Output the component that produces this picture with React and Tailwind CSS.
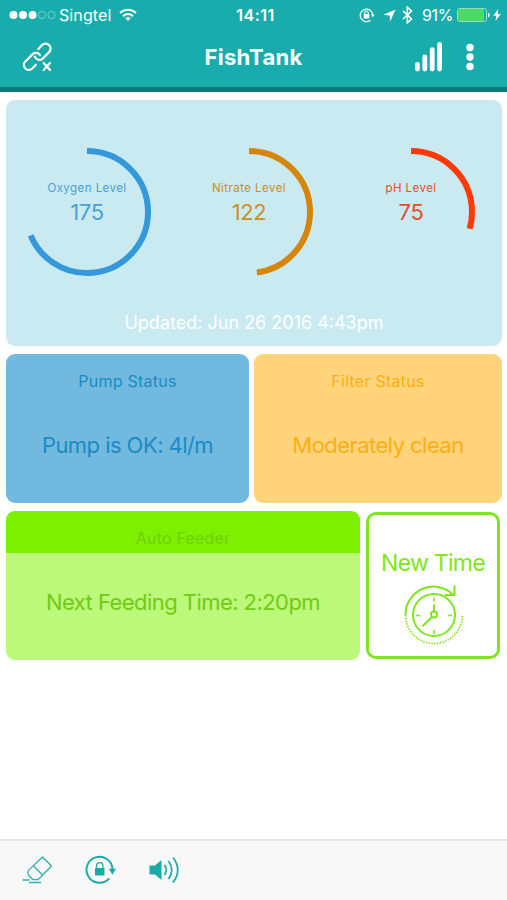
import React from 'react';

const gauges = [
  { label: 'Oxygen Level', value: 175, stroke: '#3498db', text: 'text-[#4a9fd8]' },
  { label: 'Nitrate Level', value: 122, stroke: '#d68508', text: 'text-[#cf8e26]' },
  { label: 'pH Level', value: 75, stroke: '#ff3a06', text: 'text-[#ea4c2b]' },
];

const MAX_LEVEL = 255;

function Gauge({ label, value, stroke, text }) {
  const circumference = 2 * Math.PI * 61;
  const filled = (value / MAX_LEVEL) * circumference;

  return (
    <div className="grid w-[162px] place-items-center">
      <svg className="col-start-1 row-start-1" width="128" height="128" viewBox="0 0 128 128" fill="none">
        <circle
          cx="64"
          cy="64"
          r="61"
          stroke={stroke}
          strokeWidth="6"
          strokeDasharray={`${filled} ${circumference}`}
          transform="rotate(-90 64 64)"
        />
      </svg>
      <div className={`col-start-1 row-start-1 flex flex-col items-center pb-[18px] ${text}`}>
        <span className="text-[11.5px] leading-[16px] tracking-[0.45px]">{label}</span>
        <span className="mt-[2px] text-[22px] leading-[28px] tracking-[-0.4px]">{value}</span>
      </div>
    </div>
  );
}

function StatusBar() {
  return (
    <div className="grid h-[30px] grid-cols-[1fr_auto_1fr] items-center text-[16px] text-white">
      <div className="ml-[9px] flex items-center">
        <svg width="47" height="10" viewBox="0 0 47 10" fill="none">
          <circle cx="4.5" cy="5" r="4" fill="#fff" />
          <circle cx="14" cy="5" r="4" fill="#fff" />
          <circle cx="23.5" cy="5" r="4" fill="#fff" />
          <circle cx="33" cy="5" r="3.6" stroke="#8ad6d4" strokeWidth="0.8" />
          <circle cx="42.5" cy="5" r="3.6" stroke="#8ad6d4" strokeWidth="0.8" />
        </svg>
        <span className="ml-[3px] tracking-[0.1px]">Singtel</span>
        <svg className="ml-[8px]" width="18" height="14" viewBox="0 0 18 14" fill="none" stroke="#fff" strokeWidth="2">
          <path d="M1 5a11.3 11.3 0 0 1 16 0" />
          <path d="M4 8.2a7 7 0 0 1 10 0" />
          <path d="M9 13 6.3 10.3a3.9 3.9 0 0 1 5.4 0Z" fill="#fff" stroke="none" />
        </svg>
      </div>
      <span className="ml-[4px] font-semibold tracking-[0.5px]">14:11</span>
      <div className="mr-[6px] flex items-center justify-end">
        <svg width="16" height="16" viewBox="0 0 16 16" fill="none" stroke="#fff">
          <path d="M11.5 13.3a6.3 6.3 0 1 1 2.3-5.3" strokeWidth="1.2" />
          <path d="m11.9 7.6 3.7 0-1.8 2.6Z" fill="#fff" stroke="none" />
          <rect x="4.8" y="7" width="5.4" height="4.4" rx=".5" fill="#fff" stroke="none" />
          <path d="M5.8 7V5.7a1.7 1.7 0 0 1 3.4 0V7" strokeWidth="1.1" />
        </svg>
        <svg className="ml-[8px]" width="13" height="13" viewBox="0 0 13 13">
          <path d="M12.5 .5 7.3 12.2 6.6 6.5 .5 5.8Z" fill="#fff" />
        </svg>
        <svg className="ml-[6px]" width="11" height="18" viewBox="0 0 11 18" fill="none" stroke="#fff" strokeWidth="1.6">
          <path d="m1 4.8 8.5 8.2-4.2 3.8V1.2L9.5 5 1 13" />
        </svg>
        <span className="ml-[9px] w-[32px] text-[16px] tracking-[-0.3px]">91%</span>
        <svg className="ml-[3px]" width="34" height="14" viewBox="0 0 34 14" fill="none">
          <rect x=".5" y=".5" width="29" height="13" rx="2" stroke="#9bdcc9" strokeWidth="1" />
          <rect x="1" y="1" width="26" height="12" rx="1" fill="#4cd964" />
          <path d="M31.2 4.5a2.8 2.8 0 0 1 0 5Z" fill="#fff" />
        </svg>
        <svg className="ml-[2px]" width="8" height="12" viewBox="0 0 8 12">
          <path d="M5.3 0 .3 6.8h3L2.5 12l5.2-7H4.6Z" fill="#fff" />
        </svg>
      </div>
    </div>
  );
}

function Header() {
  return (
    <header className="h-[92px] border-b-[5px] border-[#0c7c7b] bg-[#18adac]">
      <StatusBar />
      <div className="grid h-[54px] grid-cols-[1fr_auto_1fr] items-center">
        <button className="ml-[22px] justify-self-start">
          <svg width="31" height="31" viewBox="22 41.5 31 31" fill="none" stroke="#fff" strokeWidth="2.2" strokeLinecap="round">
            <path d="m38.4 48.6 3.6-4a4.9 4.9 0 0 1 7.2 6.9l-6.5 6.6a4.9 4.9 0 0 1-7.9-1.9" />
            <path d="M40 54.6a4.9 4.9 0 0 0-7.3-1L25.3 61a4.9 4.9 0 0 0 7 7l3.6-3.8" />
            <path d="m43.7 62.5 6.3 7M50 62.5l-6.3 7" />
          </svg>
        </button>
        <h1 className="text-[22px] font-bold leading-[28px] tracking-[0.3px] text-white">FishTank</h1>
        <div className="mr-[33px] flex items-center justify-self-end">
          <svg width="28" height="31" viewBox="0 0 28 31" fill="#fff">
            <rect x="0" y="20" width="4.8" height="9.5" rx="2.4" />
            <rect x="7.4" y="12.5" width="4.8" height="17" rx="2.4" />
            <rect x="14.8" y="5.2" width="4.8" height="24.3" rx="2.4" />
            <rect x="22.2" y="0" width="4.8" height="29.5" rx="2.4" />
          </svg>
          <svg className="ml-[23px]" width="8" height="28" viewBox="0 0 8 28" fill="#fff">
            <circle cx="4" cy="4.5" r="3.7" />
            <circle cx="4" cy="14" r="3.7" />
            <circle cx="4" cy="23.5" r="3.7" />
          </svg>
        </div>
      </div>
    </header>
  );
}

function StatusCard({ title, message, className }) {
  return (
    <section className={`flex h-[149px] flex-col items-center rounded-[9px] ${className}`}>
      <h2 className="mt-[16px] text-[16px] leading-[22px] tracking-[0.25px]">{title}</h2>
      <p className="mt-[38px] text-[22px] leading-[30px] tracking-[-0.55px]">{message}</p>
    </section>
  );
}

function ClockIcon() {
  return (
    <svg width="60" height="62" viewBox="0 0 60 62" fill="none" stroke="#7ee61c" strokeWidth="2">
      <path d="M1.5 31a28 28 0 0 1 48-20" />
      <path d="M50.5 1.5V11H41" />
      <path d="M1.5 31a28.5 28.5 0 0 0 57 0" strokeWidth="1.7" strokeDasharray="1.5 1.3" />
      <circle cx="30" cy="31" r="21" />
      <circle cx="30" cy="30.5" r="3" />
      <path d="M30 27.5v-7M28 32.8l-9.5 9.5" />
      <path d="M30 13.5v4M30 46v4M12 31.5h4M44 31.5h4" strokeWidth="1.6" />
    </svg>
  );
}

function Toolbar() {
  return (
    <footer className="flex h-[61px] items-center border-t-2 border-[#e6e6e6] bg-[#f8f8f8] pb-[2px] pl-[22px]">
      <button>
        <svg width="31" height="28" viewBox="0 0 31 28" fill="none" stroke="#2fb0ab" strokeWidth="1.3" strokeLinejoin="round">
          <path d="M20.500 1 29.500 10 17 22.700q-1 1-2.400 1h-2.200q-1.400 0-2.400-1l-3-3q-1-1-1-2.400v-1q0-1.400 1-2.400Z" />
          <path d="m11.500 10 9 9M.5 24h7M7 26.500h12" />
        </svg>
      </button>
      <button className="ml-[32px]">
        <svg width="31" height="30" viewBox="0 0 31 30" fill="none" stroke="#1aaba8" strokeWidth="2">
          <path d="M24.3 23.3A13 13 0 1 1 27.5 14" />
          <path d="M23.8 13.7h7.2l-3.600 6Z" fill="#1aaba8" stroke="none" />
          <rect x="10" y="13" width="9.5" height="7.5" rx=".6" fill="#1aaba8" stroke="none" />
          <path d="M11.500 13v-2.200a3.200 3.200 0 0 1 6.400 0V13" strokeWidth="1.300" />
        </svg>
      </button>
      <button className="ml-[32px]">
        <svg width="32" height="28" viewBox="0 0 32 28" fill="none" stroke="#1aaba8" strokeWidth="1.700">
          <path d="M1.500 9.500h5.500l6.500-5.500v20l-6.500-5.500H1.500Z" fill="#1aaba8" stroke="none" />
          <path d="M16.500 9q3.500 5 0 10M20.500 5q6.500 9 0 18M25 1.500q9.500 12.500 0 25" />
        </svg>
      </button>
    </footer>
  );
}

export default function App() {
  return (
    <div className="flex h-[900px] w-[507px] flex-col overflow-hidden bg-white font-['Inter',sans-serif]">
      <Header />

      <main className="flex flex-1 flex-col gap-[8px] pl-[6px] pr-[5px] pt-[8px]">
        <section className="flex h-[246px] flex-col items-center rounded-[9px] bg-[#c8eaf0] pt-[48px]">
          <div className="mr-[10px] flex">
            {gauges.map((gauge) => (
              <Gauge key={gauge.label} {...gauge} />
            ))}
          </div>
          <p className="mt-[35px] text-[18px] leading-[24px] text-white">Updated: Jun 26 2016 4:43pm</p>
        </section>

        <div className="grid grid-cols-[243px_248px] gap-[5px]">
          <StatusCard title="Pump Status" message="Pump is OK: 4l/m" className="bg-[#72b9df] text-[#1b8bc4]" />
          <StatusCard title="Filter Status" message="Moderately clean" className="bg-[#ffd47a] text-[#ffae13]" />
        </div>

        <div className="flex gap-[6px]">
          <section className="flex h-[149px] w-[354px] flex-col overflow-hidden rounded-[9px] bg-[#bcf87a] text-center">
            <h2 className="h-[42px] bg-[#7df000] pt-[16px] text-[16px] leading-[22px] tracking-[0.2px] text-[#71cf0b]">Auto Feeder</h2>
            <p className="mt-[34px] text-[22px] leading-[30px] tracking-[-0.55px] text-[#73ca14]">Next Feeding Time: 2:20pm</p>
          </section>
          <button className="mt-[1px] flex h-[147px] w-[134px] flex-col items-center rounded-[10px] border-[3px] border-[#7ee61c] bg-white pt-[33px] text-[#7ee61c]">
            <span className="text-[23px] leading-[30px] tracking-[-0.7px]">New Time</span>
            <span className="ml-[1px] mt-[6px]">
              <ClockIcon />
            </span>
          </button>
        </div>
      </main>

      <Toolbar />
    </div>
  );
}
